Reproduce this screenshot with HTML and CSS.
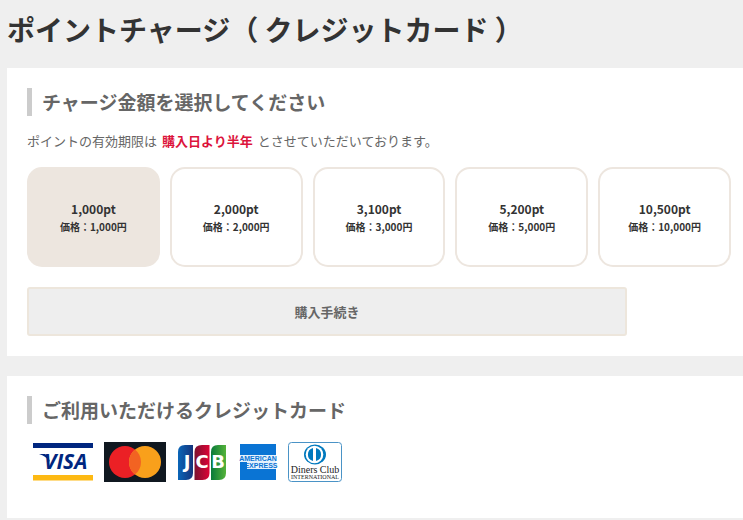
FILE: index.html
```html
<!DOCTYPE html>
<html lang="ja">
<head>
    <meta charset="UTF-8">
    <meta name="viewport" content="width=device-width, initial-scale=1.0">
    <title>ポイントチャージ</title>
    <link rel="stylesheet" href="styles.css">
</head>
<body>
    <h1>ポイントチャージ（ クレジットカード ）</h1>

    <form class="panel">
        <h2>チャージ金額を選択してください</h2>
        <p class="note">ポイントの有効期限は<strong>購入日より半年</strong>とさせていただいております。</p>
        <div class="plans">
            <label class="plan">
                <input type="radio" name="plan" value="1000" checked>
                <span class="point">1,000pt</span>
                <span class="price">価格：1,000円</span>
            </label>
            <label class="plan">
                <input type="radio" name="plan" value="2000">
                <span class="point">2,000pt</span>
                <span class="price">価格：2,000円</span>
            </label>
            <label class="plan">
                <input type="radio" name="plan" value="3000">
                <span class="point">3,100pt</span>
                <span class="price">価格：3,000円</span>
            </label>
            <label class="plan">
                <input type="radio" name="plan" value="5000">
                <span class="point">5,200pt</span>
                <span class="price">価格：5,000円</span>
            </label>
            <label class="plan">
                <input type="radio" name="plan" value="10000">
                <span class="point">10,500pt</span>
                <span class="price">価格：10,000円</span>
            </label>
        </div>
        <button class="button" type="button">購入手続き</button>
    </form>

    <section class="panel panel-cards">
        <h2>ご利用いただけるクレジットカード</h2>
        <div class="cards">
            <!-- VISA -->
            <svg width="62" height="40" viewBox="0 0 62 40" role="img" aria-label="VISA">
                <rect x="1" y="1" width="60" height="5" fill="#00267f"/>
                <rect x="1" y="33" width="60" height="5.500" fill="#fdb913"/>
                <path d="M7 12h6l3 2 2 6q-4-6-11-8z" fill="#00267f"/>
                <text x="12" y="27" class="visa">VISA</text>
            </svg>
            <!-- Mastercard -->
            <svg width="62" height="40" viewBox="0 0 62 40" role="img" aria-label="Mastercard">
                <rect width="62" height="40" fill="#101820"/>
                <circle cx="21" cy="20" r="16" fill="#eb2025"/>
                <circle cx="41" cy="20" r="16" fill="#f9a01b"/>
                <path d="M31 7.500a16 16 0 0 1 0 25a16 16 0 0 1 0-25z" fill="#f26322"/>
            </svg>
            <!-- JCB -->
            <svg width="52" height="40" viewBox="0 0 52 40" role="img" aria-label="JCB">
                <defs>
                    <linearGradient id="jcb-blue"><stop offset="0" stop-color="#0a66b8"/><stop offset="1" stop-color="#15347c"/></linearGradient>
                    <linearGradient id="jcb-red"><stop offset="0" stop-color="#7b1230"/><stop offset="1" stop-color="#dc0436"/></linearGradient>
                    <linearGradient id="jcb-green"><stop offset="0" stop-color="#087a3a"/><stop offset="1" stop-color="#55b33a"/></linearGradient>
                </defs>
                <path d="M9 3h8v28q0 7-7 7H2V10q0-7 7-7z" fill="url(#jcb-blue)"/>
                <path d="M26 3h7.500v28q0 7-7 7h-8V10q0-7 7.500-7z" fill="url(#jcb-red)"/>
                <path d="M42 3h8v28q0 7-7 7h-8V10q0-7 7-7z" fill="url(#jcb-green)"/>
                <g class="jcb">
                    <text x="11" y="26">J</text>
                    <text x="26" y="26">C</text>
                    <text x="42" y="26">B</text>
                </g>
            </svg>
            <!-- American Express -->
            <svg width="40" height="40" viewBox="0 0 40 40" role="img" aria-label="American Express">
                <rect x="2" y="2" width="36" height="36" fill="#0a74d4"/>
                <rect x="2" y="13" width="36" height="7" fill="#e4f1fc"/>
                <rect x="9" y="20" width="29" height="7" fill="#e4f1fc"/>
                <text x="20" y="19" class="amex">AMERICAN</text>
                <text x="23" y="26" class="amex">EXPRESS</text>
            </svg>
            <!-- Diners Club -->
            <svg width="54" height="40" viewBox="0 0 54 40" role="img" aria-label="Diners Club International">
                <rect x="0.500" y="0.500" width="53" height="39" rx="3" fill="#fff" stroke="#4a93c6"/>
                <ellipse cx="27" cy="12.500" rx="11" ry="10" fill="#0079be"/>
                <circle cx="26.500" cy="12.500" r="8.800" fill="#fff"/>
                <path d="M25 6v13a6.700 6.700 0 0 1 0-13zM28 6v13a6.700 6.700 0 0 0 0-13z" fill="#0079be"/>
                <text x="27" y="31" class="diners">Diners Club</text>
                <text x="27" y="37" class="diners-sub">INTERNATIONAL</text>
            </svg>
        </div>
    </section>
</body>
</html>
```
FILE: styles.css
```css
* {
    box-sizing: border-box;
}
body {
    margin: 0;
    padding-left: 7px;
    background-color: #efefef;
    color: #666;
    font-family: "Noto Sans CJK JP", sans-serif;
    font-size: 13px;
}
h1 {
    margin: 0;
    padding: 9px 0 19px;
    color: #333;
    font-size: 28px;
    line-height: 40px;
}
h2 {
    margin: 0;
    padding-left: 10px;
    border-left: 5px solid #ccc;
    font-size: 19px;
    line-height: 28px;
}
.panel {
    margin-bottom: 20px;
    padding: 20px 12px 20px 20px;
    background-color: #fff;
}
.note {
    margin: 15px 0 16px;
    line-height: 20px;
}
.note strong {
    margin: 0 5px;
    color: #dc143c;
}
/* 金額の選択 */
.plans {
    display: grid;
    grid-template-columns: repeat(5, 1fr);
    gap: 10px;
}
.plan {
    display: flex;
    flex-direction: column;
    align-items: center;
    justify-content: center;
    height: 100px;
    padding-top: 2px;
    border: 2px solid #ede6df;
    border-radius: 15px;
    color: #333;
    font-weight: bold;
    line-height: 18px;
    cursor: pointer;
}
.plan:has(input:checked) {
    background-color: #ede6df;
}
.plan input {
    appearance: none;
    margin: 0;
}
.point {
    font-size: 12px;
}
.price {
    font-size: 10px;
}
.button {
    display: block;
    width: 100%;
    max-width: 600px;
    margin-top: 20px;
    padding: 12px;
    border: 2px solid #ede6dc;
    border-radius: 3px;
    background-color: #eee;
    color: #666;
    font-family: inherit;
    font-size: 13px;
    font-weight: bold;
    line-height: 21px;
    cursor: pointer;
}
/* カードのロゴ */
.panel-cards {
    margin-bottom: 0;
    padding-bottom: 36px;
}
.cards {
    display: flex;
    flex-wrap: wrap;
    gap: 10px;
    margin-top: 18px;
    padding-left: 5px;
}
.visa {
    fill: #00267f;
    font: italic bold 21px "Open Sans", sans-serif;
}
.jcb {
    fill: #fff;
    font: bold 18px "DejaVu Sans", sans-serif;
    text-anchor: middle;
}
.amex {
    fill: #0a74d4;
    font: bold 7px "Liberation Sans", sans-serif;
    text-anchor: middle;
}
.diners {
    fill: #222;
    font: 10px "Liberation Serif", serif;
    text-anchor: middle;
}
.diners-sub {
    fill: #222;
    font: 6px "Liberation Serif", serif;
    text-anchor: middle;
}
```
